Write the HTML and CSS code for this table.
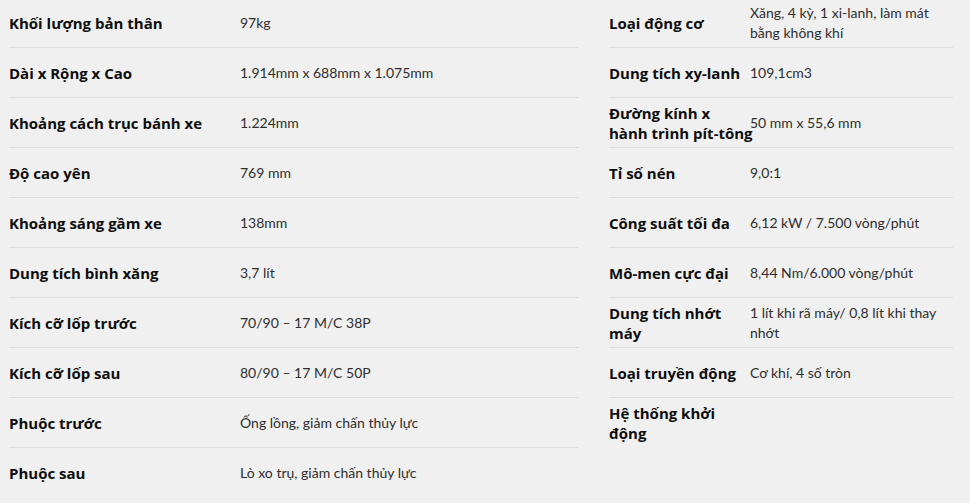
FILE: index.html
```html
<!DOCTYPE html>
<html lang="vi">
  <head>
    <meta charset="UTF-8" />
    <meta name="viewport" content="width=device-width, initial-scale=1.0" />
    <title>Thông số kỹ thuật</title>
    <link rel="stylesheet" href="styles.css">
  </head>
  <body>
    <div class="specs">
      <div class="spec-table spec-left">
        <div class="spec-row"><div class="spec-label">Khối lượng bản thân</div><div class="spec-value">97kg</div></div>
        <div class="spec-row"><div class="spec-label">Dài x Rộng x Cao</div><div class="spec-value">1.914mm x 688mm x 1.075mm</div></div>
        <div class="spec-row"><div class="spec-label">Khoảng cách trục bánh xe</div><div class="spec-value">1.224mm</div></div>
        <div class="spec-row"><div class="spec-label">Độ cao yên</div><div class="spec-value">769 mm</div></div>
        <div class="spec-row"><div class="spec-label">Khoảng sáng gầm xe</div><div class="spec-value">138mm</div></div>
        <div class="spec-row"><div class="spec-label">Dung tích bình xăng</div><div class="spec-value">3,7 lít</div></div>
        <div class="spec-row"><div class="spec-label">Kích cỡ lốp trước</div><div class="spec-value">70/90 – 17 M/C 38P</div></div>
        <div class="spec-row"><div class="spec-label">Kích cỡ lốp sau</div><div class="spec-value">80/90 – 17 M/C 50P</div></div>
        <div class="spec-row"><div class="spec-label">Phuộc trước</div><div class="spec-value">Ống lồng, giảm chấn thủy lực</div></div>
        <div class="spec-row"><div class="spec-label">Phuộc sau</div><div class="spec-value">Lò xo trụ, giảm chấn thủy lực</div></div>
      </div>

      <div class="spec-table spec-right">
        <div class="spec-row"><div class="spec-label">Loại động cơ</div><div class="spec-value">Xăng, 4 kỳ, 1 xi-lanh, làm mát bằng không khí</div></div>
        <div class="spec-row"><div class="spec-label">Dung tích xy-lanh</div><div class="spec-value">109,1cm3</div></div>
        <div class="spec-row"><div class="spec-label">Đường kính x <span class="nowrap">hành trình pít-tông</span></div><div class="spec-value">50 mm x 55,6 mm</div></div>
        <div class="spec-row"><div class="spec-label">Tỉ số nén</div><div class="spec-value">9,0:1</div></div>
        <div class="spec-row"><div class="spec-label">Công suất tối đa</div><div class="spec-value">6,12 kW / 7.500 vòng/phút</div></div>
        <div class="spec-row"><div class="spec-label">Mô-men cực đại</div><div class="spec-value">8,44 Nm/6.000 vòng/phút</div></div>
        <div class="spec-row"><div class="spec-label">Dung tích nhớt máy</div><div class="spec-value">1 lít khi rã máy/ 0,8 lít khi thay nhớt</div></div>
        <div class="spec-row"><div class="spec-label">Loại truyền động</div><div class="spec-value">Cơ khí, 4 số tròn</div></div>
        <div class="spec-row"><div class="spec-label">Hệ thống khởi động</div><div class="spec-value"></div></div>
      </div>
    </div>
  </body>
</html>
```

FILE: styles.css
```css
body {
  margin: 0;
  padding: 0;
  background: #f0f0f0;
  color: #111;
  font-family: "Lato", "Noto Sans", sans-serif;
}

.specs {
  display: flex;
  flex-direction: row;
  align-items: flex-start;
  gap: 30px;
  margin-top: -2px;
  padding-left: 9px;
}

.spec-table {
  display: flex;
  flex-direction: column;
}
.spec-left {
  width: 570px;
}
.spec-right {
  width: 344px;
}

.spec-row {
  display: grid;
  grid-template-columns: 231px 1fr;
  align-items: center;
  height: 49px;
  border-bottom: 1px solid #dddddd;
}
.spec-right .spec-row {
  grid-template-columns: 141px 1fr;
}
.spec-row:last-child {
  border-bottom: none;
}

.spec-label {
  font-family: "Open Sans", "Noto Sans", sans-serif;
  font-weight: bold;
  font-size: 15px;
  line-height: 20px;
  color: #0d0d0d;
}
.spec-right .spec-label {
  margin-right: 1px;
}
.nowrap {
  white-space: nowrap;
}

.spec-value {
  font-size: 14px;
  line-height: 20px;
  color: #2e2e2e;
}
```
